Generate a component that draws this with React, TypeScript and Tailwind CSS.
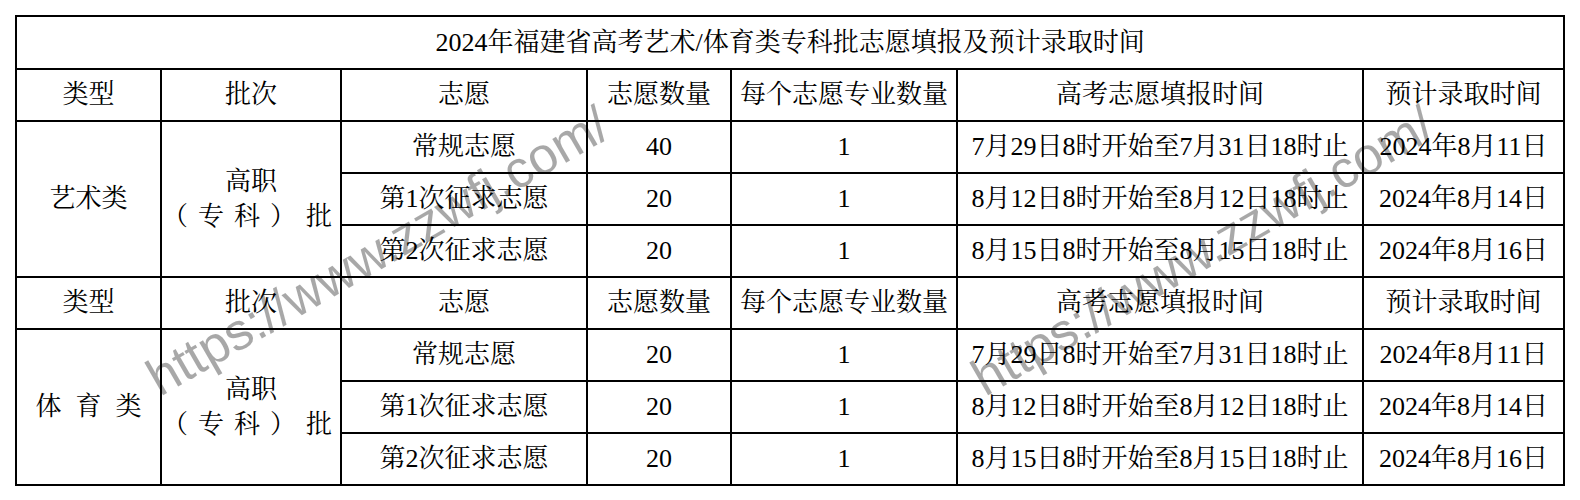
const serif = {
  fontFamily: '"Liberation Serif", "Noto Serif CJK SC", "Noto Sans CJK SC", serif',
};

const header = ["类型", "批次", "志愿", "志愿数量", "每个志愿专业数量", "高考志愿填报时间", "预计录取时间"];

const rows = [
  { name: "常规志愿", count: "40", dates: "7月29日8时开始至7月31日18时止", admit: "2024年8月11日" },
  { name: "第1次征求志愿", count: "20", dates: "8月12日8时开始至8月12日18时止", admit: "2024年8月14日" },
  { name: "第2次征求志愿", count: "20", dates: "8月15日8时开始至8月15日18时止", admit: "2024年8月16日" },
];

const groups = [
  { type: "艺术类", spaced: false, rows },
  { type: "体育类", spaced: true, rows: [{ ...rows[0], count: "20" }, rows[1], rows[2]] },
];

const cell = "border-2 border-black text-center align-middle p-0";

function Batch() {
  return (
    <div className="flex flex-col leading-[35px]">
      <span>高职</span>
      <div className="flex justify-between pr-[8px]">
        <span>（</span>
        <span>专</span>
        <span>科</span>
        <span>）</span>
        <span>批</span>
      </div>
    </div>
  );
}

function Watermark({ left }: { left: number }) {
  return (
    <div
      className="absolute top-[353px] whitespace-nowrap text-[52px] leading-none text-black/[0.34] origin-[0_44px] -rotate-[30deg] pointer-events-none"
      style={{ left, fontFamily: '"Liberation Sans", Arial, sans-serif' }}
    >
      https://www.zzwfj.com/
    </div>
  );
}

export default function App() {
  return (
    <div className="relative w-[1580px] h-[500px] bg-white overflow-hidden">
      <div className="pl-[15px] pt-[15px]">
        <table
          className="border-collapse table-fixed w-[1548px] text-[26px] text-black leading-none"
          style={serif}
        >
          <colgroup>
            <col className="w-[145px]" />
            <col className="w-[180px]" />
            <col className="w-[246px]" />
            <col className="w-[144px]" />
            <col className="w-[226px]" />
            <col className="w-[406px]" />
            <col className="w-[201px]" />
          </colgroup>
          <tbody>
            <tr className="h-[53px]">
              <td colSpan={7} className={cell}>
                2024年福建省高考艺术/体育类专科批志愿填报及预计录取时间
              </td>
            </tr>
            {groups.map((g) => (
              <>
                <tr key={g.type + "-h"} className="h-[52px]">
                  {header.map((h) => (
                    <td key={h} className={cell}>
                      {h}
                    </td>
                  ))}
                </tr>
                {g.rows.map((r, i) => (
                  <tr key={g.type + r.name} className="h-[52px]">
                    {i === 0 && (
                      <>
                        <td rowSpan={3} className={cell}>
                          {g.spaced ? (
                            <div className="flex justify-center gap-[14px]">
                              {g.type.split("").map((c) => (
                                <span key={c}>{c}</span>
                              ))}
                            </div>
                          ) : (
                            g.type
                          )}
                        </td>
                        <td rowSpan={3} className={cell}>
                          <Batch />
                        </td>
                      </>
                    )}
                    <td className={cell}>{r.name}</td>
                    <td className={cell}>{r.count}</td>
                    <td className={cell}>1</td>
                    <td className={cell}>{r.dates}</td>
                    <td className={cell}>{r.admit}</td>
                  </tr>
                ))}
              </>
            ))}
          </tbody>
        </table>
      </div>
      <Watermark left={160} />
      <Watermark left={985} />
    </div>
  );
}
